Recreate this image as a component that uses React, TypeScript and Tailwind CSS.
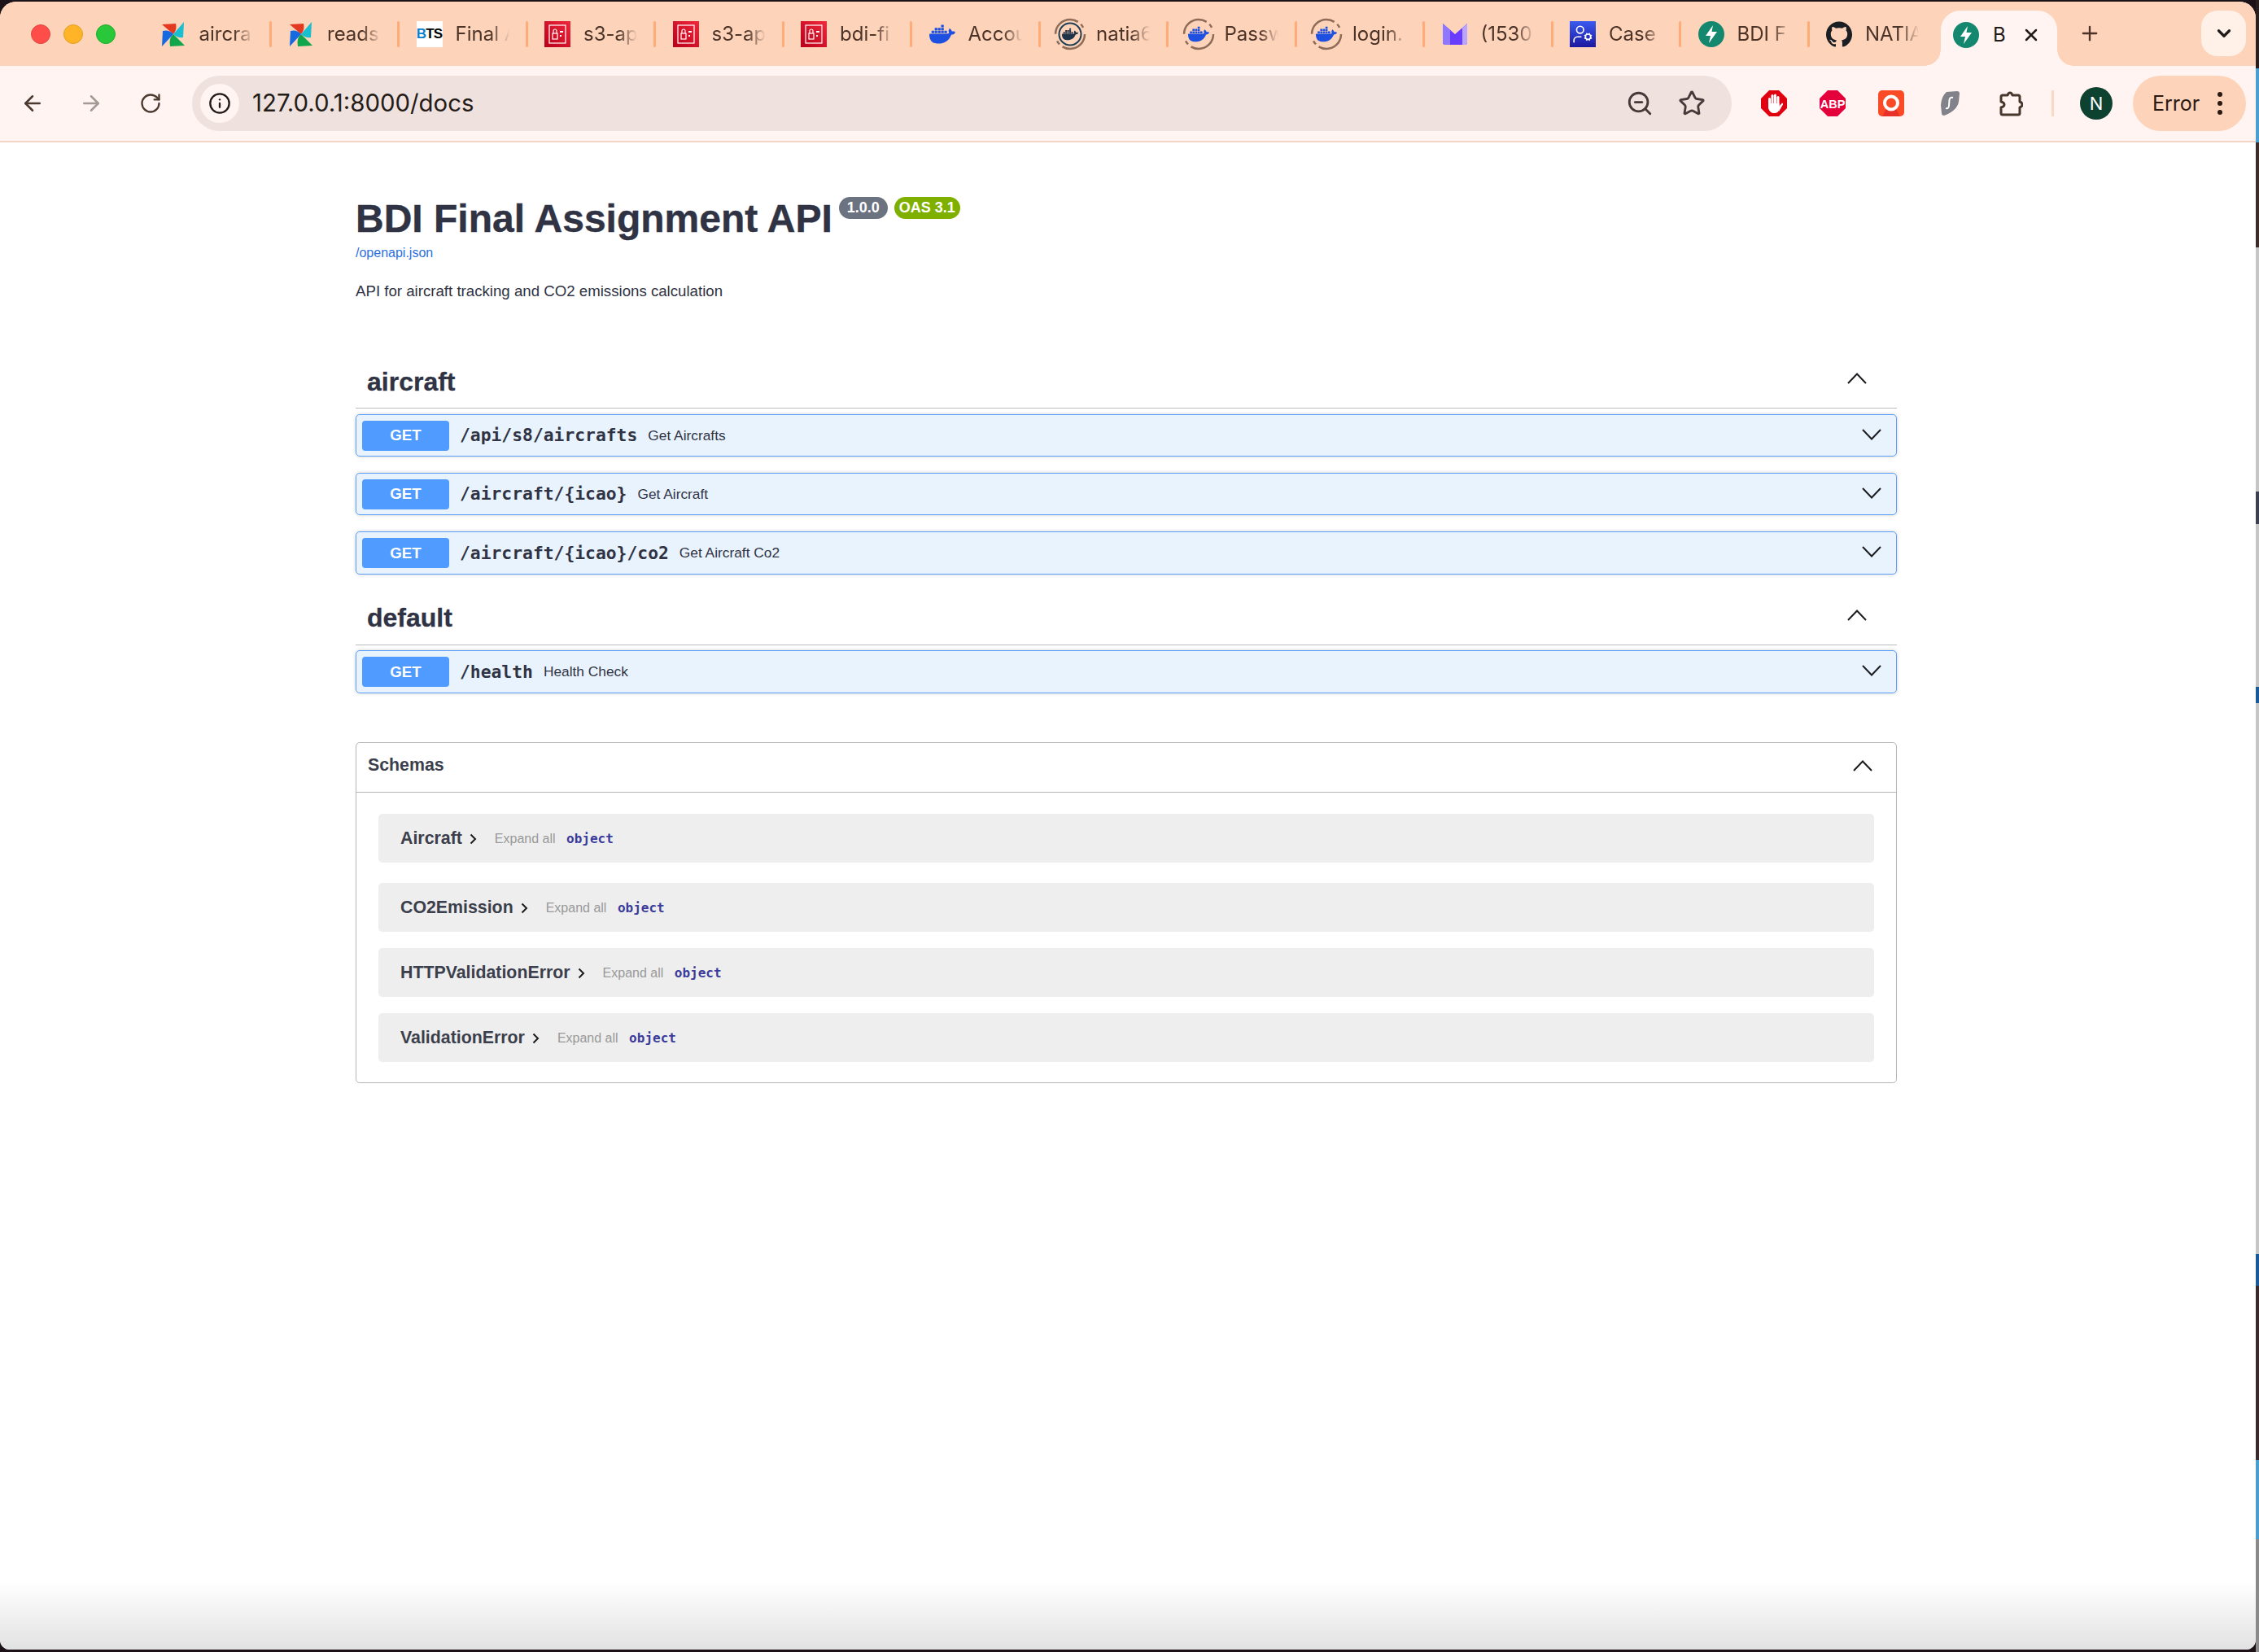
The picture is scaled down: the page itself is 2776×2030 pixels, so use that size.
import React from 'react';
import { ArrowLeft, ArrowRight, ChevronDown, Info, Plus, RotateCw, Star, UserCog, X, ZoomOut } from 'lucide-react';
import { SiDocker, SiGithub } from 'react-icons/si';

const Pinwheel = () => (
  <svg width="30" height="30" viewBox="0 0 30 30">
    <path d="M15 15 L1 3 L18 2 Q20 9 15 15Z" fill="#e43921" />
    <path d="M15 15 L28 0 L27 19 Q20 20 15 15Z" fill="#17bfd0" />
    <path d="M15 15 L29 29 L11 30 Q9 20 15 15Z" fill="#10a64c" />
    <path d="M15 15 L1 30 L2 11 Q10 9 15 15Z" fill="#1769e0" />
  </svg>
);

const BtsIcon = () => (
  <div className="flex h-[32px] w-[32px] items-center justify-center bg-white font-['Liberation_Sans',sans-serif] text-[17px] font-bold tracking-[-0.8px]">
    <span className="text-[#0a7fd0]">B</span>
    <span className="text-black">TS</span>
  </div>
);

const AwsIcon = () => (
  <div className="h-[32px] w-[32px] bg-[linear-gradient(45deg,#b8001a,#f0283c)]">
    <svg width="32" height="32" viewBox="0 0 32 32" fill="none" stroke="#fff" strokeWidth="1.2">
      <rect x="6" y="5" width="20" height="22" />
      <rect x="10" y="15" width="6" height="7" />
      <path d="M11 15v-3a2 2 0 0 1 4 0v3" />
      <path d="M19 13h4M19 18h2" strokeWidth="2" />
    </svg>
  </div>
);

const Whale = ({ size = 32, color = '#1d4fe0' }: { size?: number; color?: string }) => <SiDocker size={size} color={color} />;

const RingWhale = ({ dark }: { dark?: boolean }) => (
  <div className="relative flex h-[30px] w-[30px] items-center justify-center">
    <svg className="absolute left-[-5px] top-[-5px]" width="40" height="40" viewBox="0 0 40 40" fill="none">
      <circle cx="20" cy="20" r="18" stroke="#8f6c58" strokeWidth="2.5" strokeDasharray="38 4.5 5 9" />
      {dark && <circle cx="20" cy="20" r="13.5" stroke="#1f3f55" strokeWidth="2" />}
    </svg>
    {dark ? <Whale size={20} color="#1f3448" /> : <Whale size={26} />}
  </div>
);

const MailIcon = () => (
  <svg width="32" height="28" viewBox="0 0 32 28">
    <path d="M1 1 L16 14 L31 1 V24 a3 3 0 0 1-3 3 H4 a3 3 0 0 1-3-3Z" fill="#6a3cff" />
    <path d="M1 1 L10 9 V27 H4 a3 3 0 0 1-3-3Z" fill="#8f78ff" />
    <path d="M31 1 L25 6.5 V27 H28 a3 3 0 0 0 3-3Z" fill="#b9a6ff" />
  </svg>
);

const CaseIcon = () => (
  <div className="flex h-[32px] w-[32px] items-center justify-center bg-[linear-gradient(to_bottom,#3b5af0,#1c18a0)]">
    <UserCog size={26} color="#fff" strokeWidth={1.5} />
  </div>
);

const FastApiIcon = () => (
  <svg width="32" height="32" viewBox="0 0 32 32">
    <circle cx="16" cy="16" r="16" fill="#14876f" />
    <path d="M18 5 L9 18 h6 l-2 9 L23 13 h-6.5Z" fill="#fff" />
  </svg>
);

const tabs: { title: string; icon: React.ReactNode }[] = [
  { title: 'aircra', icon: <Pinwheel /> },
  { title: 'reads', icon: <Pinwheel /> },
  { title: 'Final A', icon: <BtsIcon /> },
  { title: 's3-ap', icon: <AwsIcon /> },
  { title: 's3-ap', icon: <AwsIcon /> },
  { title: 'bdi-fi', icon: <AwsIcon /> },
  { title: 'Accou', icon: <Whale /> },
  { title: 'natia6', icon: <RingWhale dark /> },
  { title: 'Passw', icon: <RingWhale /> },
  { title: 'login.', icon: <RingWhale /> },
  { title: '(1530', icon: <MailIcon /> },
  { title: 'Case', icon: <CaseIcon /> },
  { title: 'BDI F', icon: <FastApiIcon /> },
  { title: 'NATIA', icon: <SiGithub size={32} color="#1b1f23" /> },
];

const Tab = ({ title, icon, last }: { title: string; icon: React.ReactNode; last: boolean }) => (
  <div className="flex h-[32px] w-[157.5px] shrink-0 items-center pl-[22px]">
    <div className="flex w-[32px] justify-center">{icon}</div>
    <span className="ml-[16px] w-[66px] whitespace-nowrap text-[24px] leading-[32px] text-[#4c3328] [mask-image:linear-gradient(to_right,black_65%,transparent)]">
      {title}
    </span>
    {!last && <div className="ml-auto mr-[-1.5px] h-[32px] w-[3px] rounded-full bg-[#ffab78]" />}
  </div>
);

const TabStrip = () => (
  <div className="flex h-[79px] shrink-0 items-center bg-[#fdd3ba]">
    <div className="flex w-[174.5px] shrink-0 items-center gap-[16px] pl-[38px]">
      <div className="h-[24px] w-[24px] rounded-full border border-[#e0443e] bg-[#ff4d4a]" />
      <div className="h-[24px] w-[24px] rounded-full border border-[#dea123] bg-[#ffb327]" />
      <div className="h-[24px] w-[24px] rounded-full border border-[#1aab29] bg-[#28c83a]" />
    </div>
    {tabs.map((t, i) => (
      <Tab key={i} title={t.title} icon={t.icon} last={i === tabs.length - 1} />
    ))}
    <div className="relative ml-[5.5px] flex h-[68px] w-[143px] shrink-0 items-center self-end rounded-t-[24px] bg-[#fff4f1] pb-[8px] pl-[15px] before:absolute before:bottom-0 before:left-[-20px] before:h-[20px] before:w-[20px] before:bg-[radial-gradient(circle_at_0_0,transparent_19.5px,#fff4f1_20px)] before:content-[''] after:absolute after:bottom-0 after:right-[-20px] after:h-[20px] after:w-[20px] after:bg-[radial-gradient(circle_at_100%_0,transparent_19.5px,#fff4f1_20px)] after:content-['']">
      <FastApiIcon />
      <span className="ml-[17px] text-[24px] leading-[32px] text-[#201a18]">B</span>
      <X size={24} color="#201a18" strokeWidth={2.5} className="ml-[19px]" />
    </div>
    <Plus size={28} color="#4c3328" strokeWidth={2} className="ml-[26px] mb-[2px] shrink-0" />
    <div className="ml-auto mr-[12px] flex h-[56px] w-[55px] shrink-0 items-center justify-center self-start mt-[11px] rounded-[20px] bg-[#fff0e8]">
      <ChevronDown size={26} color="#201a18" strokeWidth={3} />
    </div>
  </div>
);

const StopHand = () => (
  <svg width="32" height="32" viewBox="0 0 32 32">
    <polygon points="10,0 22,0 32,10 32,22 22,32 10,32 0,22 0,10" fill="#e0000f" />
    <g fill="#fff">
      <rect x="9" y="9" width="3" height="12" rx="1.5" />
      <rect x="12.5" y="5" width="3" height="14" rx="1.5" />
      <rect x="16" y="4.5" width="3" height="14" rx="1.5" />
      <rect x="19.5" y="7" width="3" height="13" rx="1.5" />
      <path d="M9 16 H22.5 V23 Q22 28 16 28 Q11 28 9 22Z" />
      <path d="M22 20 L26 15.5 Q27.5 15.5 27 17.5 L22 26Z" />
    </g>
  </svg>
);

const AbpIcon = () => (
  <svg width="32" height="32" viewBox="0 0 32 32">
    <polygon points="10,0 22,0 32,10 32,22 22,32 10,32 0,22 0,10" fill="#e4003a" />
    <text x="16" y="21.5" textAnchor="middle" fontSize="14.5" fontWeight="700" fill="#fff" fontFamily="Liberation Sans, sans-serif">
      ABP
    </text>
  </svg>
);

const RecordIcon = () => (
  <svg width="32" height="32" viewBox="0 0 32 32">
    <rect width="32" height="32" rx="5" fill="#fb4a26" />
    <path d="M10 23 L5 32 H27 L22 23Z" fill="#e8312a" />
    <circle cx="16" cy="15.5" r="8" fill="none" stroke="#fff" strokeWidth="4" />
  </svg>
);

const SurfIcon = () => (
  <svg width="23" height="30" viewBox="0 0 23 30">
    <path d="M7 1 L20 0 Q23 0 23 3 L22 13 Q20 24 4 30 Q1 30 1 27 L0 17 Q1 6 7 1Z" fill="#82838a" />
    <path d="M15 8 Q11 7 10.5 11 L10 18 Q9.5 22 6 21" fill="none" stroke="#fff" strokeWidth="2" />
  </svg>
);

const PuzzleIcon = () => (
  <svg width="32" height="32" viewBox="0 0 32 32" fill="none" stroke="#47362c" strokeWidth="3" strokeLinejoin="round">
    <path d="M7 6 H13 Q14 3 16 3 Q18 3 19 6 H26 Q28 6 28 8 V14 Q31 15 31 17.5 Q31 20 28 21 V28 Q28 30 26 30 H7 Q5 30 5 28 V21 Q9 20 9 17.5 Q9 15 5 14 V8 Q5 6 7 6Z" />
  </svg>
);

const Toolbar = () => (
  <div className="flex h-[94px] shrink-0 items-center border-b-2 border-[#f3d5c8] bg-[#fff4f1] pl-[25px] pr-[12px]">
    <ArrowLeft size={30} color="#4c3a30" strokeWidth={2} />
    <ArrowRight size={30} color="#a39a95" strokeWidth={2} className="ml-[42px]" />
    <RotateCw size={28} color="#4c3a30" strokeWidth={2} className="ml-[44px]" />
    <div className="ml-[37px] flex h-[68px] w-[1892px] shrink-0 items-center rounded-full bg-[#efe1dd] pl-[10px] pr-[32px]">
      <div className="flex h-[48px] w-[48px] items-center justify-center rounded-full bg-[#fff4f1]">
        <Info size={28} color="#201a18" strokeWidth={2} />
      </div>
      <span className="ml-[16px] text-[29.4px] leading-[36px] text-[#241c19]">127.0.0.1:8000/docs</span>
      <ZoomOut size={34} color="#47393a" strokeWidth={2} className="ml-auto" />
      <Star size={34} color="#47393a" strokeWidth={2} className="ml-[30px]" />
    </div>
    <div className="ml-[36px]"><StopHand /></div>
    <div className="ml-[40px]"><AbpIcon /></div>
    <div className="ml-[40px]"><RecordIcon /></div>
    <div className="ml-[45px]"><SurfIcon /></div>
    <div className="ml-[46px]"><PuzzleIcon /></div>
    <div className="ml-[35px] h-[32px] w-[3px] bg-[#fbd8c4]" />
    <div className="ml-[32px] flex h-[40px] w-[40px] items-center justify-center rounded-full bg-[#0d4231] text-[22px] text-white">N</div>
    <div className="ml-[25px] flex h-[68px] w-[139px] items-center rounded-full bg-[#fdd3ba] pl-[24px] pr-[29px]">
      <span className="text-[25px] leading-[36px] text-[#2a1a14]">Error</span>
      <div className="ml-auto flex flex-col gap-[5px]">
        <span className="h-[6px] w-[6px] rounded-full bg-[#2a1a14]" />
        <span className="h-[6px] w-[6px] rounded-full bg-[#2a1a14]" />
        <span className="h-[6px] w-[6px] rounded-full bg-[#2a1a14]" />
      </div>
    </div>
  </div>
);

const Chevron = ({ up }: { up?: boolean }) => (
  <svg width="24" height="14" viewBox="0 0 24 14" fill="none" stroke="#1c1c20" strokeWidth="2">
    <path d={up ? 'M1 13 L12 1.5 L23 13' : 'M1 1 L12 12.5 L23 1'} />
  </svg>
);

const OpRow = ({ path, summary, tall }: { path: string; summary: string; tall?: boolean }) => (
  <div className={`flex items-center rounded-[5px] border border-[#5a9ff7] bg-[#e9f3fe] pl-[7px] pr-[18px] shadow-[0_0_4px_rgba(0,0,0,0.19)] ${tall ? 'h-[53px]' : 'h-[52px]'}`}>
    <div className="flex h-[37px] w-[107px] items-center justify-center rounded-[4px] bg-[#4f9bff] text-[18.67px] font-bold text-white">GET</div>
    <span className="ml-[13px] font-['DejaVu_Sans_Mono',monospace] text-[21.33px] font-bold text-[#2f3344]">{path}</span>
    <span className="ml-[13px] pt-[1px] text-[17.33px] text-[#2f3344]">{summary}</span>
    <div className="ml-auto mb-[3px]"><Chevron /></div>
  </div>
);

const TagHeader = ({ name, lift }: { name: string; lift?: boolean }) => (
  <div className="flex h-[65px] items-center border-b border-[#bcbcc0] pl-[14px] pr-[37px]">
    <span className={`text-[32px] font-bold text-[#2f3344] [-webkit-text-stroke:0.3px_#2f3344] ${lift ? 'mb-[3px]' : ''}`}>{name}</span>
    <div className="ml-auto mb-[8px]"><Chevron up /></div>
  </div>
);

const ModelRow = ({ name }: { name: string }) => (
  <div className="flex h-[60px] items-center rounded-[5px] bg-[#eeeeee] pl-[27px] pt-[2px]">
    <span className="text-[21.33px] font-bold text-[#3b3f4c]">{name}</span>
    <svg className="ml-[9px]" width="9" height="14" viewBox="0 0 9 14" fill="none" stroke="#1c1c20" strokeWidth="2">
      <path d="M1.5 1.5 L7 7 L1.5 12.5" />
    </svg>
    <span className="ml-[22px] text-[16px] text-[#999999]">Expand all</span>
    <span className="ml-[13.5px] font-['DejaVu_Sans_Mono',monospace] text-[16px] font-bold text-[#3b3b9b]">object</span>
  </div>
);

const SwaggerDoc = () => (
  <div className="flex-1 bg-[linear-gradient(to_bottom,#ffffff_95.5%,#e2e2e2)] pl-[437px] font-['Liberation_Sans',sans-serif]">
    <div className="w-[1894px]">
      <div className="mt-[65px] flex items-start">
        <h2 className="text-[48px] font-bold leading-[58px] text-[#2f3344] [-webkit-text-stroke:0.4px_#2f3344]">BDI Final Assignment API</h2>
        <span className="ml-[8px] mt-[2px] flex h-[27px] w-[60px] items-center justify-center rounded-full bg-[#6b7280] text-[18px] font-bold text-white">1.0.0</span>
        <span className="ml-[8px] mt-[2px] flex h-[27px] w-[81px] items-center justify-center rounded-full bg-[#7fb000] text-[18px] font-bold text-white">OAS 3.1</span>
      </div>
      <a className="mt-[3px] block text-[16px] leading-[20px] text-[#2c6fe0]">/openapi.json</a>
      <p className="mt-[25px] text-[18.67px] leading-[24px] text-[#2f3344]">API for aircraft tracking and CO2 emissions calculation</p>

      <div className="mt-[67px]">
        <TagHeader name="aircraft" />
        <div className="mt-[7px] flex flex-col gap-[20px]">
          <OpRow path="/api/s8/aircrafts" summary="Get Aircrafts" />
          <OpRow path="/aircraft/{icao}" summary="Get Aircraft" />
          <OpRow path="/aircraft/{icao}/co2" summary="Get Aircraft Co2" tall />
        </div>
      </div>

      <div className="mt-[22px]">
        <TagHeader name="default" lift />
        <div className="mt-[6px]">
          <OpRow path="/health" summary="Health Check" tall />
        </div>
      </div>

      <div className="mt-[60px] rounded-[5px] border border-[#b5b5ba]">
        <div className="flex h-[61px] items-center border-b border-[#b5b5ba] pb-[5px] pl-[14px] pr-[29px]">
          <span className="text-[21.33px] font-bold text-[#3b3f4c]">Schemas</span>
          <div className="ml-auto"><Chevron up /></div>
        </div>
        <div className="flex flex-col px-[27px] pb-[25px] pt-[26px]">
          <ModelRow name="Aircraft" />
          <div className="mt-[25px]"><ModelRow name="CO2Emission" /></div>
          <div className="mt-[20px]"><ModelRow name="HTTPValidationError" /></div>
          <div className="mt-[20px]"><ModelRow name="ValidationError" /></div>
        </div>
      </div>
    </div>
  </div>
);

// sliver of the window behind, top to bottom
const sliver: [string, string][] = [
  ['h-[84px]', 'bg-[#2a1f1c]'],
  ['h-[91px]', 'bg-[#4a9fd0]'],
  ['h-[129px]', 'bg-[#3d2c28]'],
  ['h-[300px]', 'bg-[#c6c6c6]'],
  ['h-[40px]', 'bg-[#3b4151]'],
  ['h-[200px]', 'bg-[#c6c6c6]'],
  ['h-[20px]', 'bg-[#1a5a9a]'],
  ['h-[677px]', 'bg-[#c6c6c6]'],
  ['h-[39px]', 'bg-[#1a5a9a]'],
  ['h-[214px]', 'bg-[#3a2a2c]'],
  ['h-[97px]', 'bg-[#4a9fd0]'],
  ['h-[139px]', 'bg-[#8a8a8a]'],
];

export default function App() {
  return (
    <div className="flex h-[2030px] w-[2776px] overflow-hidden bg-[#1c1218] font-[Inter,sans-serif]">
      <div className="mt-[2px] flex h-[2025px] w-[2772px] shrink-0 flex-col overflow-hidden rounded-b-[12px] rounded-t-[20px] bg-white">
        <TabStrip />
        <Toolbar />
        <SwaggerDoc />
      </div>
      <div className="flex w-[4px] flex-col">
        {sliver.map(([h, c], i) => (
          <div key={i} className={`${h} ${c}`} />
        ))}
      </div>
    </div>
  );
}
